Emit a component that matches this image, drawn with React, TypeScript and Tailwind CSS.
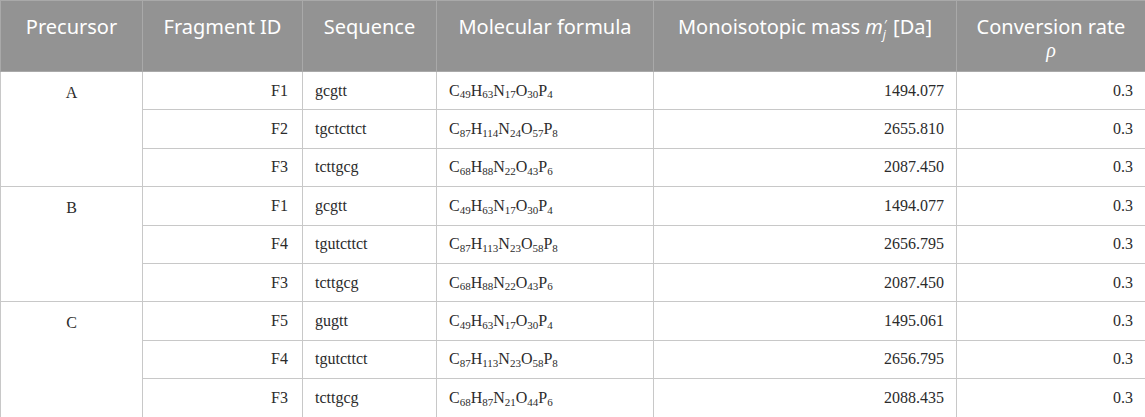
import React from 'react';

type Part = [string, string];

interface Row {
    precursor?: string;
    fragment: string;
    sequence: string;
    formula: Part[];
    mass: string;
    rate: string;
}

const rows: Row[] = [
    { precursor: 'A', fragment: 'F1', sequence: 'gcgtt', formula: [['C', '49'], ['H', '63'], ['N', '17'], ['O', '30'], ['P', '4']], mass: '1494.077', rate: '0.3' },
    { fragment: 'F2', sequence: 'tgctcttct', formula: [['C', '87'], ['H', '114'], ['N', '24'], ['O', '57'], ['P', '8']], mass: '2655.810', rate: '0.3' },
    { fragment: 'F3', sequence: 'tcttgcg', formula: [['C', '68'], ['H', '88'], ['N', '22'], ['O', '43'], ['P', '6']], mass: '2087.450', rate: '0.3' },
    { precursor: 'B', fragment: 'F1', sequence: 'gcgtt', formula: [['C', '49'], ['H', '63'], ['N', '17'], ['O', '30'], ['P', '4']], mass: '1494.077', rate: '0.3' },
    { fragment: 'F4', sequence: 'tgutcttct', formula: [['C', '87'], ['H', '113'], ['N', '23'], ['O', '58'], ['P', '8']], mass: '2656.795', rate: '0.3' },
    { fragment: 'F3', sequence: 'tcttgcg', formula: [['C', '68'], ['H', '88'], ['N', '22'], ['O', '43'], ['P', '6']], mass: '2087.450', rate: '0.3' },
    { precursor: 'C', fragment: 'F5', sequence: 'gugtt', formula: [['C', '49'], ['H', '63'], ['N', '17'], ['O', '30'], ['P', '4']], mass: '1495.061', rate: '0.3' },
    { fragment: 'F4', sequence: 'tgutcttct', formula: [['C', '87'], ['H', '113'], ['N', '23'], ['O', '58'], ['P', '8']], mass: '2656.795', rate: '0.3' },
    { fragment: 'F3', sequence: 'tcttgcg', formula: [['C', '68'], ['H', '87'], ['N', '21'], ['O', '44'], ['P', '6']], mass: '2088.435', rate: '0.3' },
];

const th = 'border border-[#a9a9a9] px-4 pt-[14px] align-top text-center font-normal';
const td = 'border border-[#c8c8c8] h-[38.4px] px-3 align-middle';

const Formula: React.FC<{ parts: Part[] }> = ({ parts }) => (
    <span>
        {parts.map(([el, n], i) => (
            <React.Fragment key={i}>
                {el}
                <sub className="text-[11px]">{n}</sub>
            </React.Fragment>
        ))}
    </span>
);

export default function App() {
    return (
        <div className="w-[1145px] h-[417px] bg-white overflow-hidden">
            <table className="w-[1145px] border-collapse table-fixed">
                <colgroup>
                    <col className="w-[142px]" />
                    <col className="w-[160px]" />
                    <col className="w-[134px]" />
                    <col className="w-[217px]" />
                    <col className="w-[303px]" />
                    <col className="w-[189px]" />
                </colgroup>
                <thead>
                    <tr className="h-[71px] bg-[#939393] text-white text-[20px] leading-[23px] font-['Noto_Sans',sans-serif]">
                        <th className={th}>Precursor</th>
                        <th className={th}>Fragment ID</th>
                        <th className={th}>Sequence</th>
                        <th className={th}>Molecular formula</th>
                        <th className={th}>
                            Monoisotopic mass{' '}
                            <i>m</i>
                            <span className="relative inline-block w-[5px]">
                                <span className="absolute left-[1px] -top-[15px] text-[12px] leading-none italic">′</span>
                                <span className="absolute left-0 -top-[5px] text-[12px] leading-none italic">j</span>
                            </span>{' '}
                            [Da]
                        </th>
                        <th className={th}>
                            Conversion rate
                            <br />
                            <i className="font-['Liberation_Serif',serif]">ρ</i>
                        </th>
                    </tr>
                </thead>
                <tbody className="text-[16px] text-[#2b2b2b] font-['Liberation_Serif',serif]">
                    {rows.map((r, i) => (
                        <tr key={i}>
                            {r.precursor && (
                                <td rowSpan={3} className="border border-[#c8c8c8] px-3 pt-[9px] align-top text-center">
                                    {r.precursor}
                                </td>
                            )}
                            <td className={`${td} text-right pr-[14px]`}>{r.fragment}</td>
                            <td className={td}>{r.sequence}</td>
                            <td className={td}>
                                <Formula parts={r.formula} />
                            </td>
                            <td className={`${td} text-right`}>{r.mass}</td>
                            <td className={`${td} text-right`}>{r.rate}</td>
                        </tr>
                    ))}
                </tbody>
            </table>
        </div>
    );
}
